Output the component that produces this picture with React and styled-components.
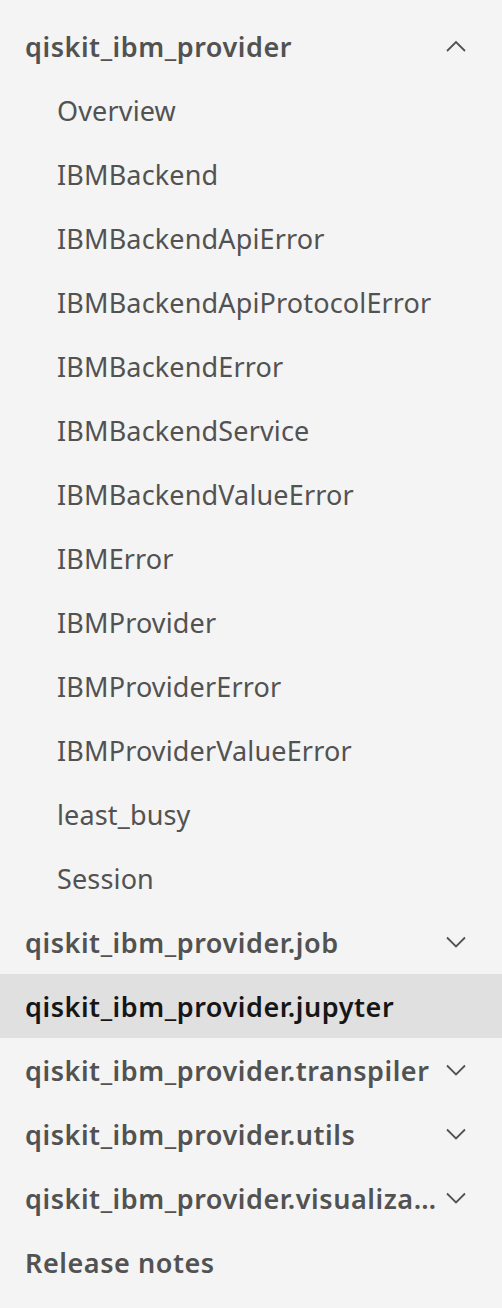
import React from "react";
import styled, { createGlobalStyle } from "styled-components";

const Global = createGlobalStyle`
  html, body { margin: 0; padding: 0; background: #f4f4f4; }
  body { font-family: "Noto Sans", "Open Sans", sans-serif; }
`;

const Nav = styled.nav`
  width: 502px;
  box-sizing: border-box;
  padding: 14px 0;
  background: #f4f4f4;
  display: flex;
  flex-direction: column;
`;

const Row = styled.div`
  height: 64px;
  display: flex;
  align-items: center;
  box-sizing: border-box;
  padding-left: ${(p) => (p.$child ? "57px" : "25px")};
  padding-right: 30px;
  background: ${(p) => (p.$active ? "#e0e0e0" : "transparent")};
`;

const Label = styled.span`
  flex: 1;
  min-width: 0;
  white-space: nowrap;
  overflow: hidden;
  text-overflow: ellipsis;
  font-size: 27px;
  font-weight: ${(p) => (p.$bold ? 600 : 400)};
  color: ${(p) => (p.$active ? "#161616" : "#525252")};
  letter-spacing: ${(p) => (p.$bold ? "0.55px" : "0.15px")};
`;

const Chevron = styled.span`
  width: 32px;
  height: 32px;
  flex: none;
  display: flex;
  align-items: center;
  justify-content: center;
  color: #525252;
`;

const Icon = ({ up }) => (
  <svg width="20" height="20" viewBox="0 0 20 20" fill="none">
    <path
      d={up ? "M1 15 L10 6 L19 15" : "M1 5.5 L10 14.5 L19 5.5"}
      stroke="currentColor"
      strokeWidth="1.8"
    />
  </svg>
);

const children = [
  "Overview",
  "IBMBackend",
  "IBMBackendApiError",
  "IBMBackendApiProtocolError",
  "IBMBackendError",
  "IBMBackendService",
  "IBMBackendValueError",
  "IBMError",
  "IBMProvider",
  "IBMProviderError",
  "IBMProviderValueError",
  "least_busy",
  "Session",
];

const sections = [
  { label: "qiskit_ibm_provider.job", chevron: true },
  { label: "qiskit_ibm_provider.jupyter", active: true },
  { label: "qiskit_ibm_provider.transpiler", chevron: true },
  { label: "qiskit_ibm_provider.utils", chevron: true },
  { label: "qiskit_ibm_provider.visualization", chevron: true },
  { label: "Release notes" },
];

export default function App() {
  return (
    <>
      <Global />
      <Nav>
        <Row>
          <Label $bold>qiskit_ibm_provider</Label>
          <Chevron>
            <Icon up />
          </Chevron>
        </Row>
        {children.map((c) => (
          <Row key={c} $child>
            <Label>{c}</Label>
          </Row>
        ))}
        {sections.map((s) => (
          <Row key={s.label} $active={s.active}>
            <Label $bold $active={s.active}>
              {s.label}
            </Label>
            {s.chevron && (
              <Chevron>
                <Icon />
              </Chevron>
            )}
          </Row>
        ))}
      </Nav>
    </>
  );
}
